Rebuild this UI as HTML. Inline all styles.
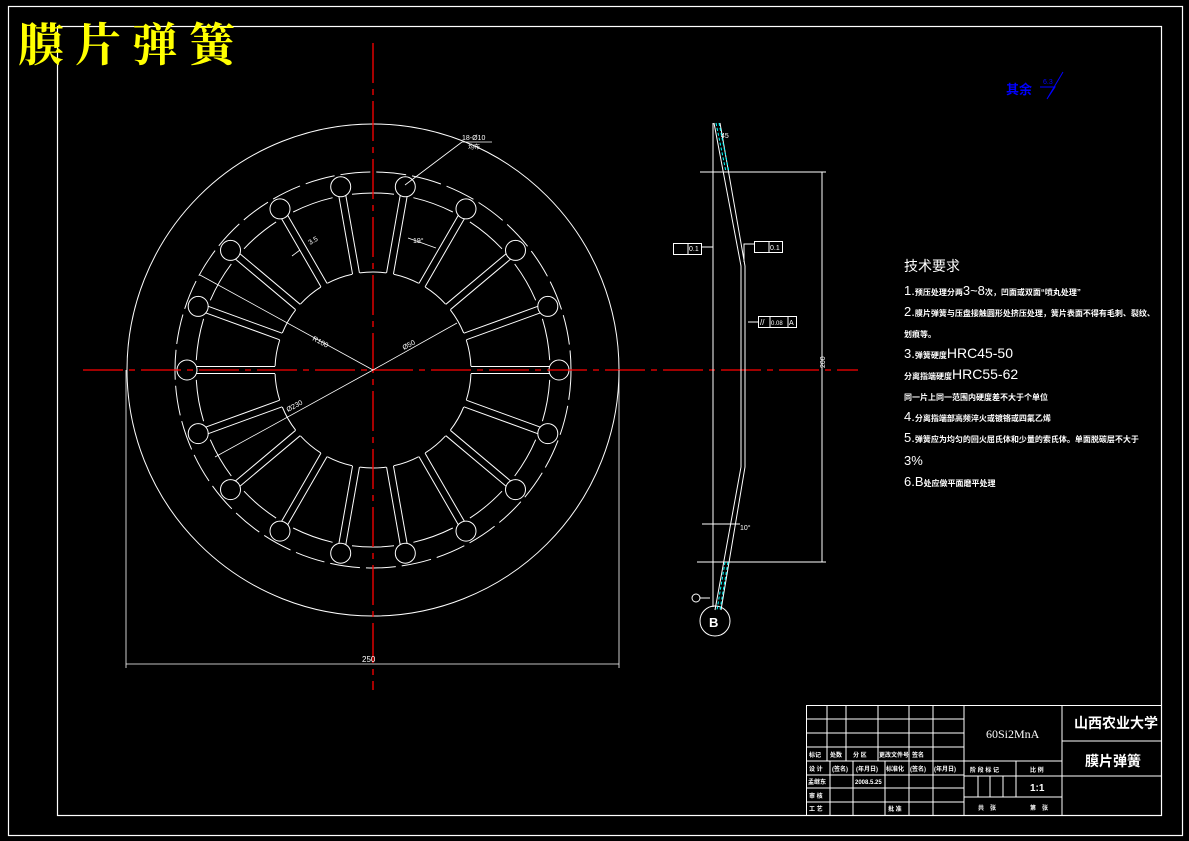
<!DOCTYPE html>
<html><head><meta charset="utf-8"><style>
html,body{margin:0;padding:0;background:#000;width:1189px;height:841px;overflow:hidden}
svg{position:absolute;left:0;top:0}
.t{font-family:"Liberation Sans","Noto Sans CJK SC",sans-serif;fill:#fff}
.s{font-family:"Liberation Serif","Noto Serif CJK SC",serif;fill:#fff}
</style></head><body>
<svg id="g" width="1189" height="841" viewBox="0 0 1189 841" xmlns="http://www.w3.org/2000/svg">
<g fill="none" stroke="#fff" stroke-width="1.2">
<rect x="8.5" y="6.5" width="1174" height="829"/>
<rect x="57.5" y="26.5" width="1104" height="789"/>
</g>
<text x="18" y="61" font-size="46" letter-spacing="11" fill="#ff0" font-weight="bold" font-family="'Noto Serif CJK SC','Liberation Serif',serif">膜片弹簧</text>
<text x="1006" y="94" font-size="13" fill="#00f" font-weight="bold" font-family="'Noto Sans CJK SC',sans-serif">其余</text>
<g stroke="#00f" fill="none" stroke-width="1"><path d="M1040 87 L1055 87 L1047 99 L1063 72"/></g>
<text x="1043" y="84" font-size="7" fill="#00f" font-family="Liberation Sans">6.3</text>

<g id="disc" fill="none" stroke="#fff" stroke-width="1"></g>
<g stroke="#f00" stroke-width="1.3" stroke-dasharray="40,6,6,6">
<line x1="83" y1="370" x2="858" y2="370"/>
<line x1="373" y1="43" x2="373" y2="690"/>
</g>
<g stroke="#fff" stroke-width="0.8" fill="none">
<line x1="126" y1="370" x2="126" y2="668"/><line x1="619" y1="370" x2="619" y2="668"/>
<line x1="126" y1="664" x2="619" y2="664"/>
<line x1="373" y1="370" x2="200" y2="275"/>
<line x1="373" y1="370" x2="457" y2="323"/>
<line x1="373" y1="370" x2="215" y2="457"/>
<line x1="405" y1="185" x2="462" y2="142"/><line x1="462" y1="142" x2="492" y2="142"/>
<line x1="300" y1="250" x2="292" y2="256"/>
<line x1="408" y1="238" x2="436" y2="248"/>
</g>
<text class="t" x="362" y="662" font-size="8">250</text>
<text class="t" x="462" y="140" font-size="7">18-Ø10</text>
<text class="t" x="468" y="149" font-size="6">均布</text>
<text class="t" x="310" y="245" font-size="7" transform="rotate(-30 310 245)">3.5</text>
<text class="t" x="413" y="243" font-size="7">19°</text>
<text class="t" x="312" y="340" font-size="7" transform="rotate(28 312 340)">R100</text>
<text class="t" x="404" y="350" font-size="7" transform="rotate(-28 404 350)">Ø50</text>
<text class="t" x="288" y="412" font-size="7" transform="rotate(-28 288 412)">Ø230</text>

<g stroke="#fff" stroke-width="1" fill="none">
<line x1="713" y1="123" x2="713" y2="607"/>
<path d="M714 123 L741 266 L741 467 L715 610"/>
<path d="M720 123 L745 266 L745 467 L721 610"/>
<line x1="700" y1="172" x2="826" y2="172"/><line x1="697" y1="562" x2="826" y2="562"/>
<line x1="822" y1="172" x2="822" y2="562"/>
<circle cx="715" cy="621" r="15"/>
<line x1="702" y1="524" x2="740" y2="524"/>
<rect x="673.5" y="243.5" width="28" height="11"/><line x1="688" y1="243" x2="688" y2="255"/>
<line x1="702" y1="247" x2="713" y2="247"/>
<rect x="754.5" y="241.5" width="28" height="11"/><line x1="769" y1="241" x2="769" y2="253"/>
<path d="M754 244 L744 244 L744 262"/>
<rect x="758.5" y="316.5" width="38" height="11"/><line x1="770" y1="316" x2="770" y2="328"/><line x1="788" y1="316" x2="788" y2="328"/>
<line x1="748" y1="322" x2="758" y2="322"/>
<circle cx="696" cy="598" r="4"/><line x1="700" y1="598" x2="710" y2="598"/>
</g>
<g stroke="#0ff" stroke-width="1" stroke-dasharray="3,2" fill="none">
<path d="M716 123 L726 172"/><path d="M719 123 L729 172"/>
<path d="M725 562 L717 610"/><path d="M728 562 L720 610"/>
</g>
<text class="t" x="721" y="138" font-size="7">45</text>
<text class="t" x="740" y="530" font-size="7">10°</text>
<text class="t" x="689" y="251" font-size="7">0.1</text>
<text class="t" x="770" y="250" font-size="7">0.1</text>
<text class="t" x="771" y="325" font-size="6">0.08</text><text class="t" x="789" y="325" font-size="7">A</text>
<text class="t" x="760" y="325" font-size="8">//</text>
<text class="t" x="822" y="375" font-size="7" transform="rotate(-90 820 370)">200</text>
<text class="t" x="709" y="627" font-size="13" font-weight="bold">B</text>

<g class="t" font-size="8" font-weight="bold">
<text x="904" y="271" font-size="14" font-weight="normal">技术要求</text>
<text x="904" y="295"><tspan font-size="13" font-weight="normal">1.</tspan>预压处理分两<tspan font-size="13" font-weight="normal">3~8</tspan>次，凹面或双面“喷丸处理”</text>
<text x="904" y="316"><tspan font-size="13" font-weight="normal">2.</tspan>膜片弹簧与压盘接触圆形处挤压处理，簧片表面不得有毛刺、裂纹、</text>
<text x="904" y="337">划痕等。</text>
<text x="904" y="358"><tspan font-size="13" font-weight="normal">3.</tspan>弹簧硬度<tspan font-size="14" font-weight="normal">HRC45-50</tspan></text>
<text x="904" y="379">分离指端硬度<tspan font-size="14" font-weight="normal">HRC55-62</tspan></text>
<text x="904" y="400">同一片上同一范围内硬度差不大于个单位</text>
<text x="904" y="421"><tspan font-size="13" font-weight="normal">4.</tspan>分离指端部高频淬火或镀铬或四氟乙烯</text>
<text x="904" y="442"><tspan font-size="13" font-weight="normal">5.</tspan>弹簧应为均匀的回火屈氏体和少量的索氏体。单面脱碳层不大于</text>
<text x="904" y="465" font-size="13" font-weight="normal">3%</text>
<text x="904" y="486"><tspan font-size="13" font-weight="normal">6.B</tspan>处应做平面磨平处理</text>
</g>

<g stroke="#fff" stroke-width="1" fill="none">
<rect x="806.5" y="705.5" width="355" height="110"/>
<line x1="964" y1="705" x2="964" y2="815"/>
<line x1="1062" y1="705" x2="1062" y2="815"/>
<line x1="1062" y1="741" x2="1161" y2="741"/><line x1="1062" y1="776" x2="1161" y2="776"/>
<line x1="964" y1="761" x2="1062" y2="761"/><line x1="964" y1="776" x2="1062" y2="776"/><line x1="964" y1="797" x2="1062" y2="797"/>
<line x1="1016" y1="761" x2="1016" y2="797"/>
<line x1="978" y1="776" x2="978" y2="797"/><line x1="990" y1="776" x2="990" y2="797"/><line x1="1003" y1="776" x2="1003" y2="797"/>
<line x1="806" y1="719" x2="964" y2="719"/><line x1="806" y1="733" x2="964" y2="733"/><line x1="806" y1="747" x2="964" y2="747"/>
<line x1="806" y1="761" x2="964" y2="761"/><line x1="806" y1="775" x2="964" y2="775"/><line x1="806" y1="788" x2="964" y2="788"/><line x1="806" y1="802" x2="964" y2="802"/>
<line x1="827" y1="705" x2="827" y2="761"/><line x1="846" y1="705" x2="846" y2="761"/><line x1="878" y1="705" x2="878" y2="761"/><line x1="909" y1="705" x2="909" y2="761"/><line x1="933" y1="705" x2="933" y2="761"/>
<line x1="830" y1="761" x2="830" y2="815"/><line x1="853" y1="761" x2="853" y2="815"/><line x1="885" y1="761" x2="885" y2="815"/><line x1="909" y1="761" x2="909" y2="815"/><line x1="933" y1="761" x2="933" y2="815"/>
</g>
<g class="t" font-size="6" font-weight="bold">
<text x="809" y="757">标记</text><text x="830" y="757">处数</text><text x="853" y="757">分 区</text><text x="879" y="757">更改文件号</text><text x="912" y="757">签名</text>
<text x="809" y="771">设 计</text><text x="832" y="771">(签名)</text><text x="856" y="771">(年月日)</text><text x="886" y="771">标准化</text><text x="910" y="771">(签名)</text><text x="934" y="771">(年月日)</text>
<text x="808" y="784">孟继东</text><text x="855" y="784">2008.5.25</text>
<text x="809" y="798">审 核</text><text x="809" y="811">工 艺</text><text x="888" y="811">批 准</text>
<text x="970" y="772">阶 段 标 记</text><text x="1030" y="772">比 例</text>
<text x="978" y="810">共　张</text><text x="1030" y="810">第　张</text>
</g>
<text class="s" x="986" y="738" font-size="12">60Si2MnA</text>
<text class="t" x="1030" y="791" font-size="10" font-weight="bold">1:1</text>
<text class="t" x="1074" y="728" font-size="14" font-weight="bold">山西农业大学</text>
<text class="t" x="1085" y="766" font-size="14" font-weight="bold">膜片弹簧</text>
</svg>
<script>
(function(){
var g=document.getElementById('disc'),cx=373,cy=370,h='',R=Math.PI/180;
function P(r,a){return [(cx+r*Math.cos(a*R)).toFixed(1),(cy-r*Math.sin(a*R)).toFixed(1)];}
h+='<circle cx="373" cy="370" r="246"/>';
h+='<circle cx="373" cy="370" r="198" stroke-dasharray="30,6"/>';
for(var k=0;k<18;k++){
 var a=k*20;
 var hc=P(186,a);
 h+='<circle cx="'+hc[0]+'" cy="'+hc[1]+'" r="10"/>';
 var ca=Math.cos(a*R),sa=Math.sin(a*R);
 [-3.5,3.5].forEach(function(o){
  var ox=-sa*o, oy=-ca*o;
  var p1=P(98,a),p2=P(177,a);
  h+='<line x1="'+(+p1[0]+ox)+'" y1="'+(+p1[1]+oy)+'" x2="'+(+p2[0]+ox)+'" y2="'+(+p2[1]+oy)+'"/>';
 });
 var a1=a+2.2,a2=a+17.8,b1=a+1.2,b2=a+18.8;
 var s=P(98,a1),e=P(98,a2);
 h+='<path d="M'+s[0]+' '+s[1]+' A98 98 0 0 0 '+e[0]+' '+e[1]+'"/>';
 s=P(177,b1+2);e=P(177,b2-2);
 h+='<path d="M'+s[0]+' '+s[1]+' A177 177 0 0 0 '+e[0]+' '+e[1]+'"/>';
}
g.innerHTML=h;
})();
</script>
</body></html>
